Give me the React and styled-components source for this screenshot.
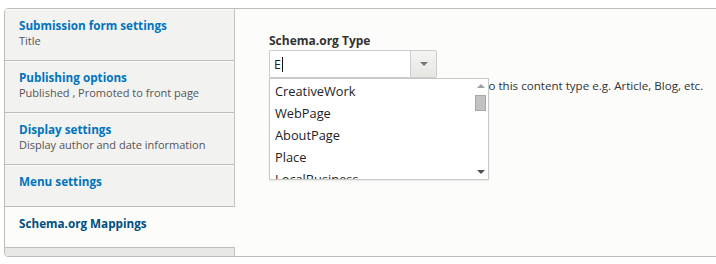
import styled, { createGlobalStyle } from "styled-components";

const GlobalStyle = createGlobalStyle`
  html, body {
    margin: 0;
    padding: 0;
    background: #fff;
    overflow: hidden;
  }
  body {
    font-family: "Open Sans", "DejaVu Sans", sans-serif;
  }
`;

const Frame = styled.div`
  margin: 8px 0 0 4px;
  width: 730px;
  height: 247px;
  display: flex;
  border: 1px solid #bdbdb8;
  border-radius: 4px;
  background: #fcfcfa;
  overflow: hidden;
`;

const Menu = styled.ul`
  list-style: none;
  margin: 0;
  padding: 0;
  width: 229px;
  flex: none;
  display: flex;
  flex-direction: column;
  background: #e8e8e5;
  border-right: 1px solid #c4c4c0;
`;

const Tab = styled.li`
  box-sizing: border-box;
  height: ${(p) => p.$height}px;
  padding: 7px 14px 0;
  background: ${(p) => (p.$selected ? "#fcfcfa" : "#f2f2f0")};
  border-bottom: 1px solid #bdbdb8;
  border-top: 1px solid ${(p) => (p.$selected ? "#fcfcfa" : "#fafaf8")};
  margin-right: ${(p) => (p.$selected ? "-1px" : "0")};
`;

const TabTitle = styled.div`
  font-size: 11.7px;
  font-weight: 700;
  line-height: 16px;
  color: ${(p) => (p.$selected ? "#004f80" : "#0074bd")};
`;

const TabSummary = styled.div`
  font-size: 11px;
  line-height: 15px;
  color: #555;
`;

const Pane = styled.div`
  flex: 1;
  padding: 24px 34px;
`;

const Label = styled.div`
  font-size: 12px;
  font-weight: 700;
  color: #333;
  line-height: 16px;
`;

const Field = styled.div`
  position: relative;
  margin-top: 1px;
`;

const Combo = styled.div`
  display: flex;
  width: 168px;
  height: 28px;
`;

const Input = styled.div`
  box-sizing: border-box;
  width: 141px;
  height: 28px;
  background: #fff;
  border: 1px solid #ccc;
  border-right: none;
  border-radius: 2px 0 0 2px;
  padding: 6px 4px;
  font-size: 12.5px;
  line-height: 15px;
  color: #222;
  display: flex;
  align-items: center;
`;

const Caret = styled.span`
  width: 1px;
  height: 15px;
  background: #111;
  margin-left: 1px;
`;

const Toggle = styled.div`
  box-sizing: border-box;
  width: 27px;
  height: 28px;
  border: 1px solid #ccc;
  border-radius: 0 2px 2px 0;
  background: linear-gradient(#f4f4f2, #e6e6e3);
  display: flex;
  align-items: center;
  justify-content: center;
  &::after {
    content: "";
    border-left: 4px solid transparent;
    border-right: 4px solid transparent;
    border-top: 4px solid #777;
  }
`;

const Description = styled.div`
  margin-top: 0;
  font-size: 11.6px;
  line-height: 16px;
  color: #333;
  white-space: nowrap;
`;

const List = styled.div`
  position: absolute;
  left: 0;
  top: 28px;
  box-sizing: border-box;
  width: 220px;
  height: 102px;
  background: #fff;
  border: 1px solid #c8c8c8;
  box-shadow: 0 1px 2px rgba(0, 0, 0, 0.08);
  display: flex;
  overflow: hidden;
`;

const Options = styled.ul`
  list-style: none;
  margin: 0;
  padding: 1px 0 0;
  flex: 1;
`;

const Option = styled.li`
  height: 22px;
  padding-left: 5px;
  font-size: 12.8px;
  line-height: 22px;
  color: #222;
`;

const Scrollbar = styled.div`
  width: 15px;
  display: flex;
  flex-direction: column;
  align-items: center;
  padding: 3px 0;
  box-sizing: border-box;
`;

const Arrow = styled.span`
  border-left: 4px solid transparent;
  border-right: 4px solid transparent;
  ${(p) =>
    p.$up
      ? "border-bottom: 4px solid #a0a0a0;"
      : "border-top: 4px solid #505050;"}
  margin: 2px 0;
`;

const Thumb = styled.div`
  width: 11px;
  height: 16px;
  margin-top: 5px;
  background: #c2c2c2;
  border: 1px solid #a8a8a8;
  box-sizing: border-box;
`;

const Spacer = styled.div`
  flex: 1;
`;

const tabs = [
  { title: "Submission form settings", summary: "Title", height: 52 },
  {
    title: "Publishing options",
    summary: "Published , Promoted to front page",
    height: 52,
  },
  {
    title: "Display settings",
    summary: "Display author and date information",
    height: 52,
  },
  { title: "Menu settings", height: 42 },
  { title: "Schema.org Mappings", height: 41, selected: true },
];

const types = ["CreativeWork", "WebPage", "AboutPage", "Place", "LocalBusiness"];

export default function App() {
  return (
    <>
      <GlobalStyle />
      <Frame>
        <Menu>
          {tabs.map((t, i) => (
            <Tab key={`tab_${i}`} $height={t.height} $selected={t.selected}>
              <TabTitle $selected={t.selected}>{t.title}</TabTitle>
              {t.summary ? <TabSummary>{t.summary}</TabSummary> : null}
            </Tab>
          ))}
        </Menu>
        <Pane>
          <Label>Schema.org Type</Label>
          <Field>
            <Combo>
              <Input>
                E<Caret />
              </Input>
              <Toggle />
            </Combo>
            <Description>
              Specify the type you want to associated to this content type
              e.g. Article, Blog, etc.
            </Description>
            <List>
              <Options>
                {types.map((t) => (
                  <Option key={t}>{t}</Option>
                ))}
              </Options>
              <Scrollbar>
                <Arrow $up />
                <Thumb />
                <Spacer />
                <Arrow />
              </Scrollbar>
            </List>
          </Field>
        </Pane>
      </Frame>
    </>
  );
}
